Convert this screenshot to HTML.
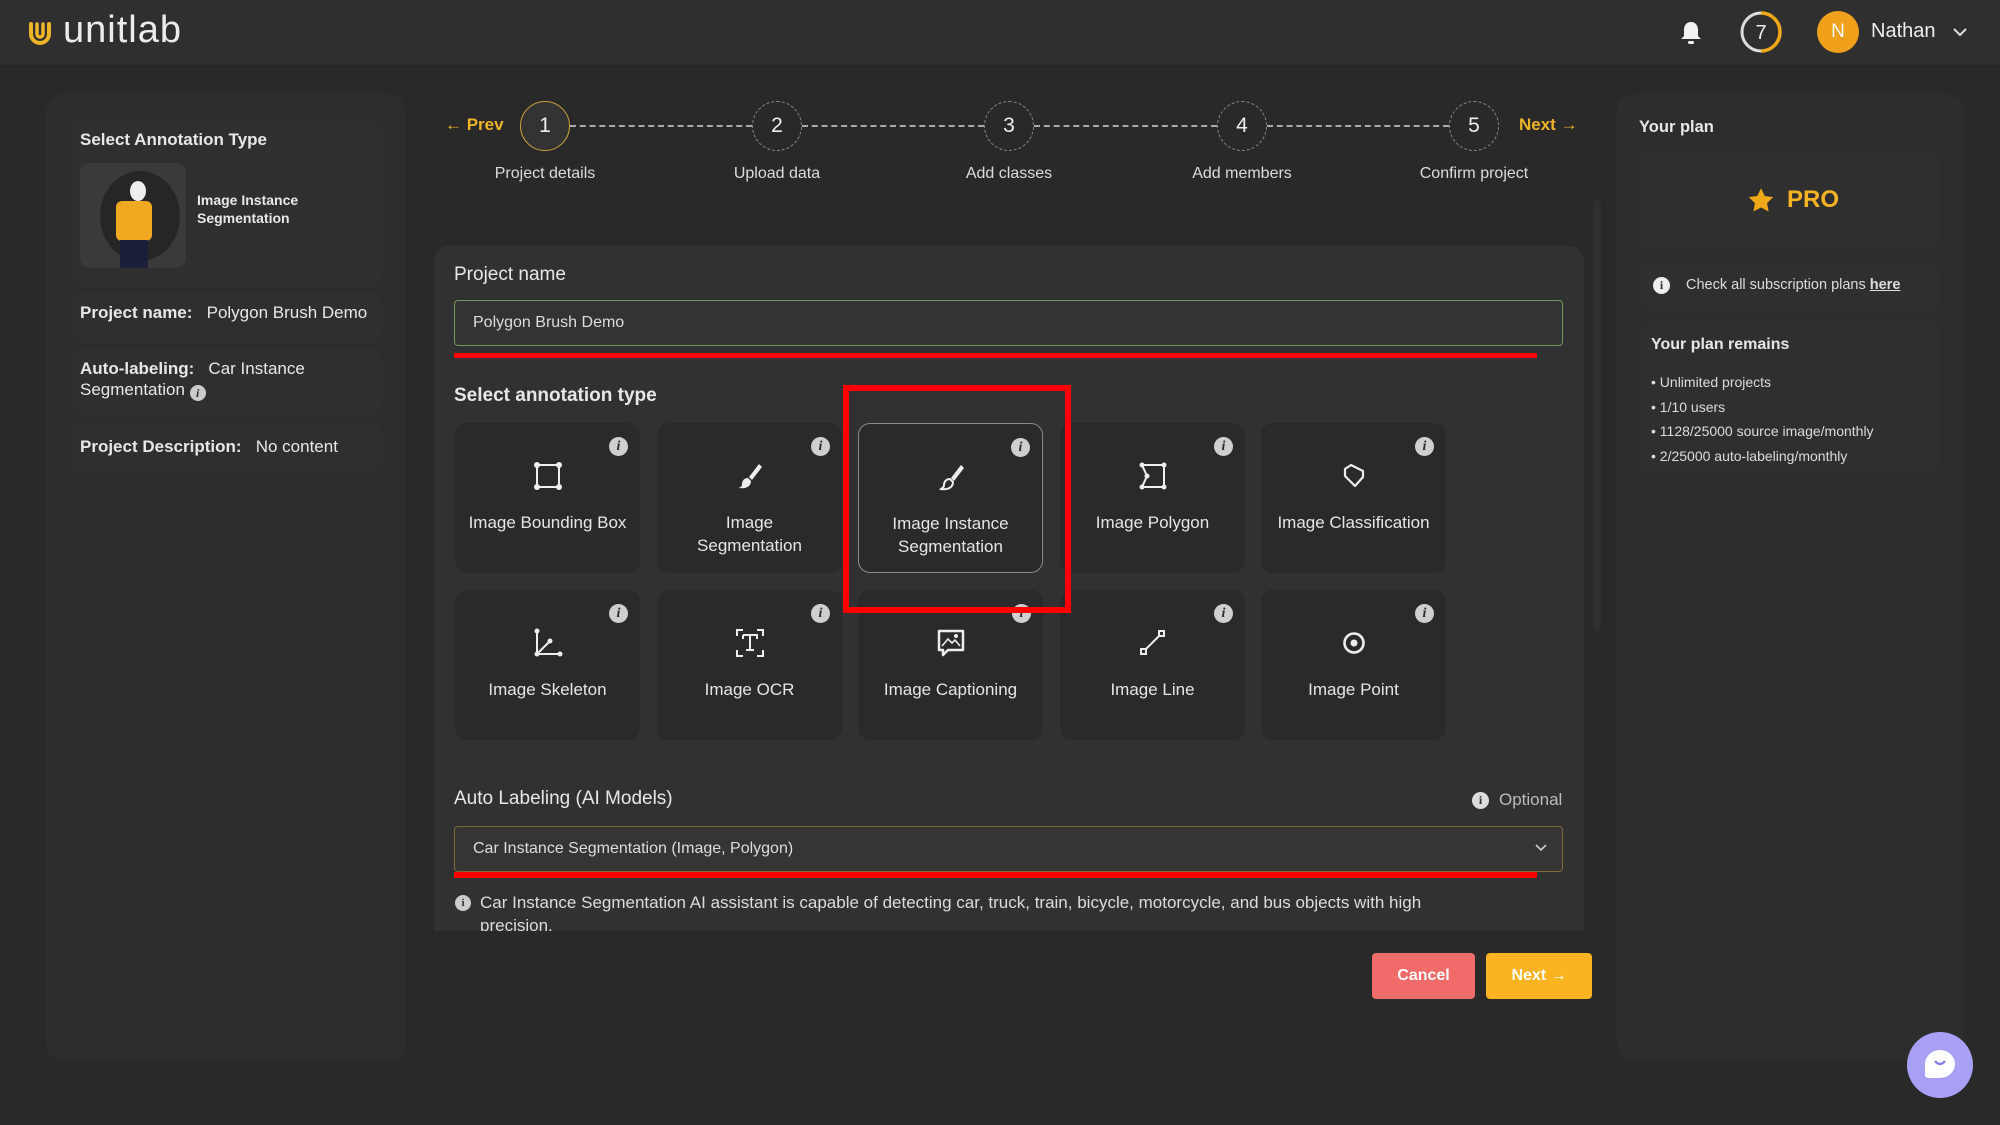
<!DOCTYPE html>
<html><head><meta charset="utf-8"><style>
*{margin:0;padding:0;box-sizing:border-box}
body{width:2000px;height:1125px;background:#292929;font-family:"Liberation Sans",sans-serif;color:#e8e8e8;position:relative;overflow:hidden}
.a{position:absolute}
.hdr{left:0;top:0;width:2000px;height:66px;background:#2f2f2f;border-bottom:1px solid #262626}
.panel{background:#2d2d2d;border-radius:18px}
.card{background:#2a2a2a;border-radius:12px;width:185px;height:150px;text-align:center;font-size:17px;color:#e6e6e6}
.card svg{position:absolute;left:78px;top:38px}
.card .t{position:absolute;left:0;right:0;top:88px;line-height:23px}
.card .i{position:absolute;right:12px;top:14px;width:19px;height:19px;border-radius:50%;background:#cfcfcf;color:#2a2a2a;font:italic bold 14px "Liberation Serif",serif;line-height:19px;text-align:center}
.step{width:50px;height:50px;border-radius:50%;border:1.5px dashed #888;text-align:center;line-height:47px;font-size:21px;color:#eee}
.sl{font-size:16px;color:#ddd;width:160px;text-align:center}
.dash{height:0;border-top:2px dashed #aaa}
.lc{background:#2f2f2f;border-radius:12px}
</style></head><body>
<div class="a hdr"></div>
<svg class="a" style="left:27px;top:18px" width="26" height="30" viewBox="0 0 26 30"><path d="M4 6v10a9 9 0 0 0 18 0V6" fill="none" stroke="#f0b429" stroke-width="4" stroke-linecap="round"/><path d="M10 6v10a3 3 0 0 0 6 0V6" fill="none" stroke="#f0b429" stroke-width="3.5" stroke-linecap="round"/></svg>
<div class="a" style="left:63px;top:9px;font-size:38px;color:#ececec;letter-spacing:1px">unitlab</div>
<svg class="a" style="left:1679px;top:20px" width="24" height="26" viewBox="0 0 24 26"><path d="M12 2c-5 0-7 4-7 8v6l-3 3h20l-3-3v-6c0-4-2-8-7-8z" fill="#f2f2f2"/><rect x="9" y="21" width="6" height="3" rx="1.5" fill="#f2f2f2"/></svg>
<svg class="a" style="left:1739px;top:10px" width="44" height="44" viewBox="0 0 44 44"><circle cx="22" cy="22" r="19" fill="none" stroke="#ddd" stroke-width="3"/><path d="M22 3a19 19 0 0 1 0 38" fill="none" stroke="#f0a818" stroke-width="3.5"/><text x="22" y="29" font-size="20" fill="#eee" text-anchor="middle" font-family="Liberation Sans">7</text></svg>
<div class="a" style="left:1817px;top:11px;width:42px;height:42px;border-radius:50%;background:#f0a01a;color:#fff;text-align:center;line-height:42px;font-size:19px">N</div>
<div class="a" style="left:1871px;top:20px;font-size:20px;color:#eee">Nathan</div>
<svg class="a" style="left:1952px;top:26px" width="16" height="12" viewBox="0 0 16 12"><path d="M2 3l6 6 6-6" fill="none" stroke="#ddd" stroke-width="2"/></svg>

<div class="a panel" style="left:46px;top:94px;width:360px;height:967px"></div>
<div class="a lc" style="left:70px;top:120px;width:312px;height:166px"></div>
<div class="a" style="left:80px;top:130px;font-size:17px;font-weight:bold">Select Annotation Type</div>
<div class="a" style="left:80px;top:163px;width:106px;height:105px;border-radius:10px;background:#3a3a3a;overflow:hidden">
<div class="a" style="left:20px;top:8px;width:80px;height:90px;border-radius:50%;background:#262626"></div>
<div class="a" style="left:36px;top:38px;width:36px;height:40px;background:#f0a820;border-radius:6px"></div>
<div class="a" style="left:50px;top:18px;width:16px;height:20px;background:#eee;border-radius:50%"></div>
<div class="a" style="left:40px;top:77px;width:28px;height:28px;background:#1c1f3a"></div></div>
<div class="a" style="left:197px;top:191px;font-size:14px;font-weight:bold;line-height:18px">Image Instance<br>Segmentation</div>
<div class="a lc" style="left:70px;top:292px;width:312px;height:50px"></div>
<div class="a" style="left:80px;top:303px;font-size:17px"><b>Project name:</b>&nbsp;&nbsp; Polygon Brush Demo</div>
<div class="a lc" style="left:70px;top:348px;width:312px;height:66px"></div>
<div class="a" style="left:80px;top:358px;font-size:17px;line-height:21px"><b>Auto-labeling:</b>&nbsp;&nbsp; Car Instance<br>Segmentation <span style="display:inline-block;width:16px;height:16px;border-radius:50%;background:#ccc;color:#2f2f2f;font:italic bold 12px 'Liberation Serif';text-align:center;line-height:16px;vertical-align:-2px">i</span></div>
<div class="a lc" style="left:70px;top:422px;width:312px;height:50px"></div>
<div class="a" style="left:80px;top:437px;font-size:17px"><b>Project Description:</b>&nbsp;&nbsp; No content</div>

<div class="a" style="left:445px;top:115px;font-size:17px;color:#f0b429;font-weight:bold">← Prev</div>
<div class="a" style="left:1519px;top:115px;font-size:17px;color:#f0b429;font-weight:bold">Next →</div>
<div class="a dash" style="left:570px;top:125px;width:182px"></div>
<div class="a dash" style="left:802px;top:125px;width:182px"></div>
<div class="a dash" style="left:1034px;top:125px;width:183px"></div>
<div class="a dash" style="left:1267px;top:125px;width:182px"></div>
<div class="a step" style="left:520px;top:101px;border:1.5px solid #c9a23a;background:#333">1</div>
<div class="a step" style="left:752px;top:101px">2</div>
<div class="a step" style="left:984px;top:101px">3</div>
<div class="a step" style="left:1217px;top:101px">4</div>
<div class="a step" style="left:1449px;top:101px">5</div>
<div class="a sl" style="left:465px;top:165px">Project details</div>
<div class="a sl" style="left:697px;top:165px">Upload data</div>
<div class="a sl" style="left:929px;top:165px">Add classes</div>
<div class="a sl" style="left:1162px;top:165px">Add members</div>
<div class="a sl" style="left:1394px;top:165px">Confirm project</div>

<div class="a" style="left:434px;top:246px;width:1150px;height:685px;background:#313131;border-radius:14px 14px 0 0"></div>
<div class="a" style="left:454px;top:264px;font-size:19px">Project name</div>
<div class="a" style="left:454px;top:300px;width:1109px;height:46px;border:1px solid #6e9a5a;border-radius:4px;background:#333;padding-left:18px;line-height:44px;font-size:16px;color:#ddd">Polygon Brush Demo</div>
<div class="a" style="left:454px;top:353px;width:1083px;height:5px;background:#f00"></div>
<div class="a" style="left:454px;top:385px;font-size:19px;font-weight:bold">Select annotation type</div>

<div class="a card" style="left:455px;top:423px"><div class="i">i</div><svg width="30" height="30" viewBox="0 0 30 30"><rect x="4" y="4" width="22" height="22" fill="none" stroke="#eee" stroke-width="2"/><g fill="#eee"><circle cx="4" cy="4" r="3"/><circle cx="26" cy="4" r="3"/><circle cx="4" cy="26" r="3"/><circle cx="26" cy="26" r="3"/></g></svg><div class="t">Image Bounding Box</div></div>
<div class="a card" style="left:657px;top:423px"><div class="i">i</div><svg width="30" height="30" viewBox="0 0 30 30"><path d="M24 3L14 16l3 3L27 6z" fill="#eee"/><path d="M13 17c-4 0-6 3-6 6s-2 3-3 4c6 1 12-1 12-7z" fill="#eee"/></svg><div class="t">Image<br>Segmentation</div></div>
<div class="a card" style="left:858px;top:423px;border:1.5px solid #8a8a8a"><div class="i">i</div><svg width="30" height="30" viewBox="0 0 30 30"><path d="M24 3L14 16l3 3L27 6z" fill="#eee"/><path d="M13 17c-4 0-6 3-6 6s-2 3-3 4c6 1 12-1 12-7z" fill="none" stroke="#eee" stroke-width="2"/></svg><div class="t">Image Instance<br>Segmentation</div></div>
<div class="a card" style="left:1060px;top:423px"><div class="i">i</div><svg width="30" height="30" viewBox="0 0 30 30"><path d="M4 4h22v22H4l5-11z" fill="none" stroke="#eee" stroke-width="2"/><g fill="#eee"><circle cx="4" cy="4" r="2.5"/><circle cx="26" cy="4" r="2.5"/><circle cx="4" cy="26" r="2.5"/><circle cx="26" cy="26" r="2.5"/><circle cx="9" cy="15" r="2.5"/></g></svg><div class="t">Image Polygon</div></div>
<div class="a card" style="left:1261px;top:423px"><div class="i">i</div><svg width="30" height="30" viewBox="0 0 30 30"><path d="M6 8l6-4 12 6v6l-8 9-10-10z" fill="none" stroke="#eee" stroke-width="2.2" stroke-linejoin="round"/></svg><div class="t">Image Classification</div></div>

<div class="a card" style="left:455px;top:590px"><div class="i">i</div><svg width="30" height="30" viewBox="0 0 30 30"><path d="M4 3v23h23M4 26L17 13" fill="none" stroke="#eee" stroke-width="2"/><g fill="#eee"><circle cx="4" cy="3" r="2.5"/><circle cx="27" cy="26" r="2.5"/><circle cx="17" cy="13" r="2.5"/><circle cx="4" cy="26" r="2.5"/></g></svg><div class="t">Image Skeleton</div></div>
<div class="a card" style="left:657px;top:590px"><div class="i">i</div><svg width="30" height="30" viewBox="0 0 30 30"><path d="M2 8V2h6M22 2h6v6M2 22v6h6M28 22v6h-6M8 7h14v4M8 7v4M15 7v15M11 22h8" fill="none" stroke="#eee" stroke-width="2"/></svg><div class="t">Image OCR</div></div>
<div class="a card" style="left:858px;top:590px"><div class="i">i</div><svg width="30" height="30" viewBox="0 0 30 30"><path d="M3 3h24v19H12l-5 5v-5H3z" fill="none" stroke="#eee" stroke-width="2.5" stroke-linejoin="round"/><path d="M6 18l6-7 4 4 3-3 5 6" fill="none" stroke="#eee" stroke-width="1.6"/><circle cx="20" cy="8" r="2" fill="#eee"/></svg><div class="t">Image Captioning</div></div>
<div class="a card" style="left:1060px;top:590px"><div class="i">i</div><svg width="30" height="30" viewBox="0 0 30 30"><rect x="3" y="21" width="5" height="5" fill="none" stroke="#eee" stroke-width="2"/><rect x="21" y="3" width="5" height="5" fill="none" stroke="#eee" stroke-width="2"/><path d="M7 22L22 7" stroke="#eee" stroke-width="2"/></svg><div class="t">Image Line</div></div>
<div class="a card" style="left:1261px;top:590px"><div class="i">i</div><svg width="30" height="30" viewBox="0 0 30 30"><circle cx="15" cy="15" r="9.5" fill="none" stroke="#eee" stroke-width="2.6"/><circle cx="15" cy="15" r="3.5" fill="#eee"/></svg><div class="t">Image Point</div></div>

<div class="a" style="left:843px;top:385px;width:228px;height:228px;border:6px solid #f00"></div>

<div class="a" style="left:454px;top:788px;font-size:19px">Auto Labeling (AI Models)</div>
<div class="a" style="left:1472px;top:792px;width:17px;height:17px;border-radius:50%;background:#ddd;color:#313131;font:bold 12px 'Liberation Serif';text-align:center;line-height:17px">i</div>
<div class="a" style="left:1499px;top:790px;font-size:17px;color:#bbb">Optional</div>
<div class="a" style="left:454px;top:826px;width:1109px;height:46px;border:1px solid #7a6a3a;border-radius:4px;background:#353535;padding-left:18px;line-height:44px;font-size:16px;color:#ddd">Car Instance Segmentation (Image, Polygon)</div>
<svg class="a" style="left:1534px;top:843px" width="14" height="10" viewBox="0 0 14 10"><path d="M2 2l5 5 5-5" fill="none" stroke="#ccc" stroke-width="1.6"/></svg>
<div class="a" style="left:454px;top:872px;width:1083px;height:6px;background:#f00"></div>
<div class="a" style="left:455px;top:895px;width:16px;height:16px;border-radius:50%;background:#ccc;color:#313131;font:bold 11px 'Liberation Serif';text-align:center;line-height:16px">i</div>
<div class="a" style="left:480px;top:891px;width:960px;height:40px;overflow:hidden;font-size:17px;line-height:23px;color:#ddd">Car Instance Segmentation AI assistant is capable of detecting car, truck, train, bicycle, motorcycle, and bus objects with high precision.</div>

<div class="a" style="left:1372px;top:953px;width:103px;height:46px;border-radius:4px;background:#f16b6b;color:#fff;text-align:center;line-height:46px;font-size:16px;font-weight:bold">Cancel</div>
<div class="a" style="left:1486px;top:953px;width:106px;height:46px;border-radius:4px;background:#fbb321;color:#fff;text-align:center;line-height:46px;font-size:16px;font-weight:bold">Next →</div>

<div class="a panel" style="left:1617px;top:94px;width:347px;height:967px"></div>
<div class="a" style="left:1593px;top:200px;width:8px;height:430px;background:#2f2f2f;border-radius:4px"></div>
<div class="a" style="left:1639px;top:118px;font-size:16.5px;font-weight:bold">Your plan</div>
<div class="a lc" style="left:1640px;top:150px;width:300px;height:100px"></div>
<svg class="a" style="left:1747px;top:187px" width="28" height="27" viewBox="0 0 24 23"><path d="M12 1l3.2 6.6 7.3 1-5.3 5.1 1.3 7.2L12 17.5 5.5 20.9l1.3-7.2L1.5 8.6l7.3-1z" fill="#f0a818"/></svg>
<div class="a" style="left:1787px;top:186px;font-size:24px;color:#f5b324;font-weight:bold">PRO</div>
<div class="a lc" style="left:1640px;top:262px;width:300px;height:50px"></div>
<div class="a" style="left:1653px;top:277px;width:17px;height:17px;border-radius:50%;background:#eee;color:#2f2f2f;font:bold 12px 'Liberation Serif';text-align:center;line-height:17px">i</div>
<div class="a" style="left:1686px;top:277px;font-size:14.5px;color:#ddd">Check all subscription plans <u style="font-weight:bold">here</u></div>
<div class="a lc" style="left:1640px;top:321px;width:300px;height:152px"></div>
<div class="a" style="left:1651px;top:336px;font-size:16px;font-weight:bold">Your plan remains</div>
<div class="a" style="left:1651px;top:370px;font-size:14px;line-height:24.5px;color:#ddd">• Unlimited projects<br>• 1/10 users<br>• 1128/25000 source image/monthly<br>• 2/25000 auto-labeling/monthly</div>

<div class="a" style="left:1907px;top:1032px;width:66px;height:66px;border-radius:50%;background:#a8a0f5"></div>
<div class="a" style="left:1925px;top:1050px;width:30px;height:28px;border-radius:50% 50% 50% 10%;background:#fff"></div>
<svg class="a" style="left:1932px;top:1058px" width="16" height="10" viewBox="0 0 16 10"><path d="M3 3q5 6 10 0" fill="none" stroke="#8c82ee" stroke-width="2.4"/></svg>
</body></html>
